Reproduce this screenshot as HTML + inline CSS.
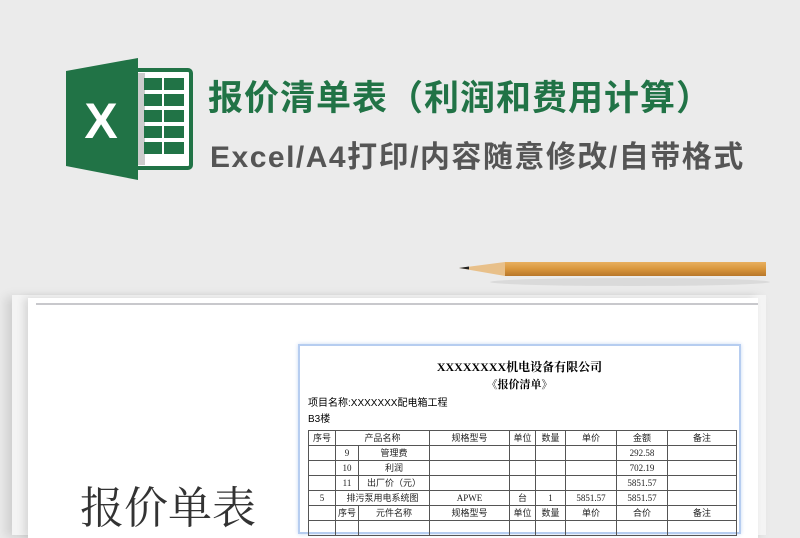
<!DOCTYPE html>
<html><head><meta charset="utf-8"><style>
*{margin:0;padding:0;box-sizing:border-box}
body{width:800px;height:526px;overflow:hidden;background:#ebebeb;position:relative;font-family:"Liberation Sans","Noto Sans CJK SC",sans-serif}
.a{position:absolute}
.t1{left:208px;top:70px;font-size:35px;font-weight:bold;color:#217346;letter-spacing:1px;white-space:nowrap}
.t2{left:210px;top:132px;font-size:30px;font-weight:bold;color:#555;white-space:nowrap;letter-spacing:1.5px}
.paper{left:12px;top:295px;width:754px;height:240px;background:#f4f4f4;box-shadow:-6px 2px 10px rgba(0,0,0,.12)}
.white{left:28px;top:298px;width:730px;height:240px;background:#fff;box-shadow:-4px 0 8px rgba(0,0,0,.12)}
.big{left:80px;top:472px;font-size:44px;color:#333;white-space:nowrap;font-family:"Liberation Serif","Noto Serif CJK SC",serif}
.sheet{left:298px;top:344px;width:443px;height:190px;background:#fff;border:2px solid #b6cdf0;box-shadow:0 0 4px #c9daf5}
table{position:absolute;left:8px;top:84px;border-collapse:collapse;font-size:9px;font-family:"Liberation Serif","Noto Sans CJK SC",serif;color:#222}
td{border:1px solid #555;height:15px;text-align:center;padding:0;line-height:13px}
</style></head><body>
<svg class="a" style="left:66px;top:58px" width="128" height="122" viewBox="0 0 128 122">
<rect x="66" y="12" width="59" height="98" rx="3" fill="#fff" stroke="#217346" stroke-width="4"/>
<rect x="72" y="15" width="7" height="92" fill="#ccc"/>
<g fill="#217346">
<rect x="78" y="20" width="18" height="12"/><rect x="98" y="20" width="20" height="12"/>
<rect x="78" y="36" width="18" height="12"/><rect x="98" y="36" width="20" height="12"/>
<rect x="78" y="52" width="18" height="12"/><rect x="98" y="52" width="20" height="12"/>
<rect x="78" y="68" width="18" height="12"/><rect x="98" y="68" width="20" height="12"/>
<rect x="78" y="84" width="18" height="12"/><rect x="98" y="84" width="20" height="12"/>
</g>
<polygon points="0,13 72,0 72,122 0,108" fill="#217346"/>
<text x="35" y="80" font-size="50" font-weight="bold" fill="#fff" text-anchor="middle" font-family="Liberation Sans">X</text>
</svg>
<div class="a t1">报价清单表（利润和费用计算）</div>
<div class="a t2">Excel/A4打印/内容随意修改/自带格式</div>
<svg class="a" style="left:455px;top:258px" width="320" height="40">
<defs><linearGradient id="p" x1="0" y1="0" x2="0" y2="1"><stop offset="0" stop-color="#e8b060"/><stop offset=".5" stop-color="#d9963c"/><stop offset="1" stop-color="#b8772a"/></linearGradient></defs>
<ellipse cx="175" cy="24" rx="140" ry="4" fill="rgba(0,0,0,.07)"/>
<polygon points="4,10 50,4 50,18" fill="#e8c08a"/>
<polygon points="4,10 14,8.5 14,11.5" fill="#222"/>
<rect x="50" y="4" width="261" height="14" fill="url(#p)"/>
</svg>
<div class="a paper"></div>
<div class="a white"></div>
<div class="a" style="left:36px;top:303px;width:722px;height:2px;background:#c8c8cc"></div>
<div class="a big">报价单表</div>
<div class="a sheet">
<div class="a" style="left:0;width:439px;top:12px;text-align:center;font-size:12px;font-weight:bold;font-family:'Liberation Serif','Noto Serif CJK SC',serif">XXXXXXXX机电设备有限公司</div>
<div class="a" style="left:0;width:439px;top:30px;text-align:center;font-size:11px;font-weight:bold;font-family:'Liberation Serif','Noto Serif CJK SC',serif">《报价清单》</div>
<div class="a" style="left:8px;top:48px;font-size:10px">项目名称:XXXXXXX配电箱工程</div>
<div class="a" style="left:8px;top:64px;font-size:10px">B3楼</div>
<table>
<tr><td style="width:27px">序号</td><td colspan="2" style="width:94px">产品名称</td><td style="width:80px">规格型号</td><td style="width:26px">单位</td><td style="width:30px">数量</td><td style="width:51px">单价</td><td style="width:51px">金额</td><td style="width:69px">备注</td></tr>
<tr style="border-top:1px solid #6c6"><td></td><td style="width:23px">9</td><td>管理费</td><td></td><td></td><td></td><td></td><td>292.58</td><td></td></tr>
<tr><td></td><td>10</td><td>利润</td><td></td><td></td><td></td><td></td><td>702.19</td><td></td></tr>
<tr><td></td><td>11</td><td>出厂价（元）</td><td></td><td></td><td></td><td></td><td>5851.57</td><td></td></tr>
<tr><td>5</td><td colspan="2">排污泵用电系统图</td><td>APWE</td><td>台</td><td>1</td><td>5851.57</td><td>5851.57</td><td></td></tr>
<tr><td></td><td>序号</td><td>元件名称</td><td>规格型号</td><td>单位</td><td>数量</td><td>单价</td><td>合价</td><td>备注</td></tr>
<tr><td></td><td></td><td></td><td></td><td></td><td></td><td></td><td></td><td></td></tr>
</table>
</div>
</body></html>
